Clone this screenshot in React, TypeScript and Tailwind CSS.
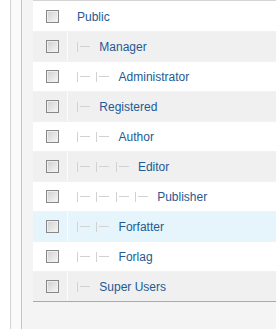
const groups: { name: string; level: number }[] = [
  { name: "Public", level: 0 },
  { name: "Manager", level: 1 },
  { name: "Administrator", level: 2 },
  { name: "Registered", level: 1 },
  { name: "Author", level: 2 },
  { name: "Editor", level: 3 },
  { name: "Publisher", level: 4 },
  { name: "Forfatter", level: 2 },
  { name: "Forlag", level: 2 },
  { name: "Super Users", level: 1 },
];

const HOVER_ROW = 7;

function Checkbox() {
  return (
    <span className="block h-[13px] w-[13px] border border-[#888] bg-gradient-to-br from-[#cfcfcf] to-[#f8f8f8] shadow-[inset_0_0_0_1px_#eeeeee]" />
  );
}

function Indent({ level }: { level: number }) {
  return (
    <>
      {Array.from({ length: level }).map((_, i) => (
        <span key={i} className="inline-flex w-[19.3px] items-center">
          <span className="h-[10px] w-px bg-[#d2d2d2]" />
          <span className="ml-[2px] h-px w-[10px] bg-[#d2d2d2]" />
        </span>
      ))}
      {level > 0 && <span className="inline-block w-[3px]" />}
    </>
  );
}

export default function App() {
  return (
    <div
      className="flex h-[329px] w-[276px] overflow-hidden bg-white text-[12px]"
      style={{ fontFamily: '"Liberation Sans", Arial, sans-serif' }}
    >
      <div className="w-[10px] shrink-0 bg-white" />
      <div className="w-px shrink-0 bg-[#d2d2d2]" />
      <div className="w-[10px] shrink-0 bg-[#fafafa]" />
      <div className="w-px shrink-0 bg-[#c4c4c4]" />
      <div className="flex-1 bg-[#f4f4f4] pl-[11px]">
        <div className="w-[300px] border-t border-[#d4d4d4] border-b border-b-[#a9a9a9]">
          {groups.map((g, i) => {
            const bg =
              i === HOVER_ROW
                ? "bg-[#e6f4fc]"
                : i % 2 === 0
                  ? "bg-white"
                  : "bg-[#f0f0f0]";
            return (
              <div
                key={g.name}
                className={`flex h-[30px] border-t border-[#f2f2f2] ${bg} ${i === 0 ? "border-t-white" : ""}`}
              >
                <div className="flex w-[34px] shrink-0 items-center pl-[13px]">
                  <Checkbox />
                </div>
                <div className="w-px shrink-0 bg-white/80" />
                <div className="flex flex-1 items-center whitespace-nowrap pl-[9px] text-[#225a94]">
                  <Indent level={g.level} />
                  <span>{g.name}</span>
                </div>
              </div>
            );
          })}
        </div>
      </div>
    </div>
  );
}
